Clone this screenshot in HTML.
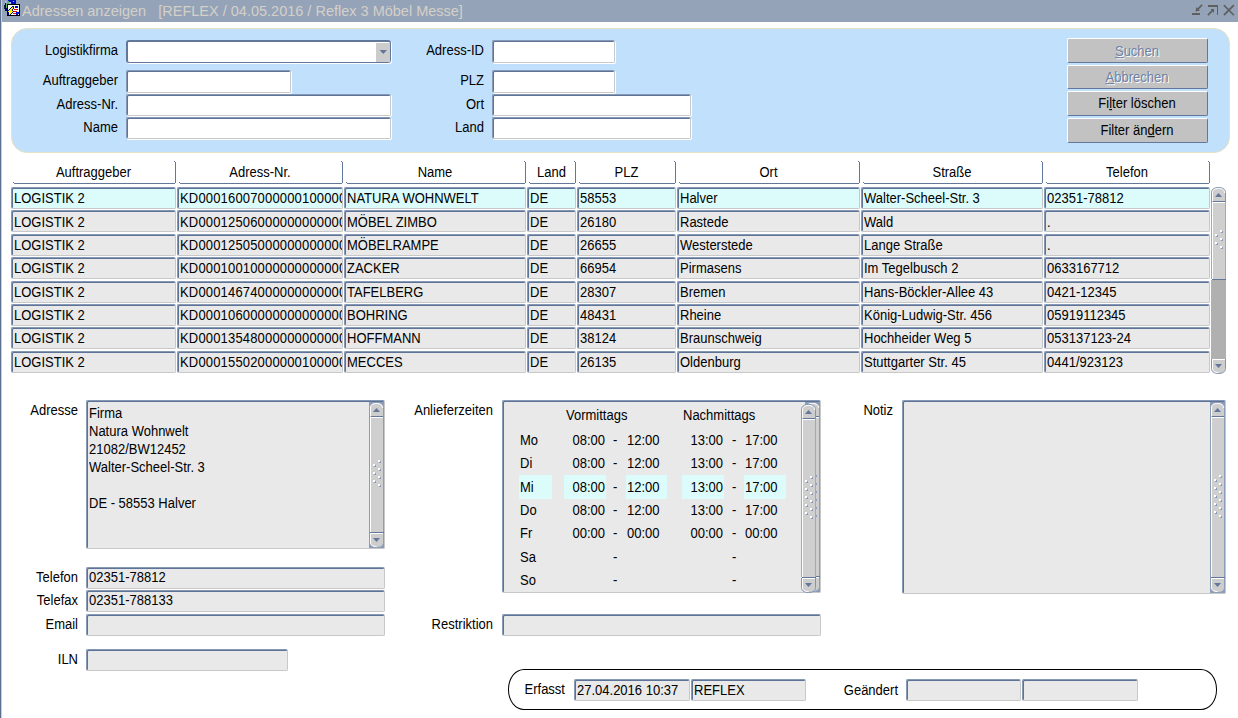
<!DOCTYPE html><html><head><meta charset="utf-8"><style>
html,body{margin:0;padding:0;}
body{width:1238px;height:718px;overflow:hidden;position:relative;background:#fff;font-family:"Liberation Sans",sans-serif;font-size:13px;color:#000;}
.a{position:absolute;box-sizing:border-box;}
.t{position:absolute;white-space:pre;line-height:15px;font-size:13px;transform:scaleY(1.1);transform-origin:0 12px;}
.f{border-top:1px solid #8798b4;border-left:1px solid #8798b4;border-right:1px solid #c8c8c8;border-bottom:1px solid #c8c8c8;border-radius:2px;box-shadow:inset 1px 1px 0 #5d7397;}
.sbb{background:#d0d0d0;border:1px solid #8a9cb6;}
.u{text-decoration:underline;}
</style></head><body>
<div class="a" style="left:0px;top:0px;width:1238px;height:22px;background:#95a3b8"></div>
<div class="a" style="left:0px;top:0px;width:1px;height:718px;background:#5b7090"></div>
<div class="a" style="left:1px;top:0px;width:1px;height:718px;background:#cfcfcf"></div>
<svg class="a" style="left:0px;top:0px" width="22" height="18" viewBox="0 0 22 18" shape-rendering="crispEdges">
<rect x="5" y="3" width="3" height="8" fill="#000070"/>
<rect x="8" y="0" width="8" height="4" fill="#0010c0"/>
<rect x="6" y="1" width="3" height="7" fill="#58b070"/>
<rect x="5" y="1" width="2" height="2" fill="#b8b0f0"/>
<rect x="9" y="2" width="2" height="2" fill="#b8b0f0"/>
<rect x="13" y="1" width="1" height="1" fill="#b8b0f0"/>
<rect x="4" y="5" width="1" height="4" fill="#102040"/>
<rect x="7" y="4" width="13" height="12" fill="#000"/>
<rect x="8" y="5" width="11" height="10" fill="#fff"/>
<rect x="15" y="6" width="3" height="2" fill="#0010d0"/>
<rect x="14" y="9" width="4" height="1" fill="#f00000"/>
<rect x="14" y="11" width="3" height="1" fill="#f00000"/>
<rect x="13" y="13" width="3" height="1" fill="#f00000"/>
<rect x="16" y="12" width="3" height="3" fill="#0010d0"/>
<rect x="18" y="14" width="1" height="1" fill="#fff"/>
<rect x="12" y="6" width="1" height="1" fill="#000080"/><rect x="13" y="6" width="1" height="1" fill="#000080"/><rect x="11" y="7" width="1" height="1" fill="#000080"/><rect x="13" y="7" width="1" height="1" fill="#000080"/><rect x="10" y="8" width="1" height="1" fill="#000080"/><rect x="13" y="8" width="1" height="1" fill="#000080"/><rect x="9" y="9" width="1" height="1" fill="#000080"/><rect x="12" y="9" width="1" height="1" fill="#000080"/><rect x="8" y="10" width="1" height="1" fill="#000080"/><rect x="12" y="10" width="1" height="1" fill="#000080"/><rect x="13" y="11" width="1" height="1" fill="#000080"/><rect x="8" y="12" width="1" height="1" fill="#000080"/><rect x="12" y="12" width="1" height="1" fill="#000080"/><rect x="8" y="13" width="1" height="1" fill="#000080"/><rect x="11" y="13" width="1" height="1" fill="#000080"/><rect x="10" y="14" width="1" height="1" fill="#000080"/><rect x="8" y="14" width="1" height="1" fill="#000080"/><rect x="12" y="7" width="1" height="1" fill="#f8f800"/><rect x="11" y="8" width="1" height="1" fill="#f8f800"/><rect x="12" y="8" width="1" height="1" fill="#f8f800"/><rect x="10" y="9" width="1" height="1" fill="#f8f800"/><rect x="11" y="9" width="1" height="1" fill="#f8f800"/><rect x="9" y="10" width="1" height="1" fill="#f8f800"/><rect x="10" y="10" width="1" height="1" fill="#f8f800"/><rect x="11" y="10" width="1" height="1" fill="#f8f800"/><rect x="8" y="11" width="1" height="1" fill="#f8f800"/><rect x="9" y="11" width="1" height="1" fill="#f8f800"/><rect x="10" y="11" width="1" height="1" fill="#f8f800"/><rect x="11" y="11" width="1" height="1" fill="#f8f800"/><rect x="12" y="11" width="1" height="1" fill="#f8f800"/><rect x="10" y="12" width="1" height="1" fill="#f8f800"/><rect x="11" y="12" width="1" height="1" fill="#f8f800"/><rect x="9" y="13" width="1" height="1" fill="#f8f800"/><rect x="10" y="13" width="1" height="1" fill="#f8f800"/><rect x="9" y="14" width="1" height="1" fill="#f8f800"/>
</svg>
<div class="t" style="left:22px;top:3px;font-size:14.5px;line-height:17px;color:#d4d0c8;transform:none">Adressen anzeigen   [REFLEX / 04.05.2016 / Reflex 3 Möbel Messe]</div>
<svg class="a" style="left:1186px;top:0px" width="52" height="22" viewBox="0 0 52 22">
<g fill="#5f5f5f">
<rect x="6" y="13" width="8" height="2"/>
<rect x="22" y="5" width="10" height="2"/>
<rect x="31" y="5" width="1" height="10"/>
</g>
<g stroke="#5f5f5f" stroke-width="1.7" fill="none" stroke-linecap="square">
<path d="M15.5 5.5 L10.5 10.5"/>
<path d="M22.5 14.5 L27 10"/>
<path d="M38.5 5.8 L47.2 14.5 M47.2 5.8 L38.5 14.5"/>
</g>
<path d="M10 7 L10 11 L14 11 Z" fill="#5f5f5f"/>
<path d="M28 9 L28 13 L24.5 9 Z" fill="#5f5f5f"/>
</svg>
<div class="a" style="left:11px;top:28px;width:1219px;height:125px;background:#c0e0fb;border:1px solid #e6e2c4;border-radius:16px;"></div>
<div class="t" style="left:-482px;width:600px;text-align:right;top:43px;">Logistikfirma</div>
<div class="t" style="left:-482px;width:600px;text-align:right;top:73px;">Auftraggeber</div>
<div class="t" style="left:-482px;width:600px;text-align:right;top:97px;">Adress-Nr.</div>
<div class="t" style="left:-482px;width:600px;text-align:right;top:120px;">Name</div>
<div class="t" style="left:-116px;width:600px;text-align:right;top:43px;">Adress-ID</div>
<div class="t" style="left:-116px;width:600px;text-align:right;top:73px;">PLZ</div>
<div class="t" style="left:-116px;width:600px;text-align:right;top:97px;">Ort</div>
<div class="t" style="left:-116px;width:600px;text-align:right;top:120px;">Land</div>
<div class="a" style="left:126px;top:40px;width:265px;height:23px;background:#fff;border:2px solid #62779a;border-right-width:1px;border-bottom-width:1px;border-radius:3px;box-shadow:1px 1px 0 #fff"></div>
<div class="a" style="left:376px;top:43px;width:14px;height:19px;background:#cccccc"></div>
<svg class="a" style="left:376px;top:46px" width="14" height="12"><path d="M3.6 4 L11 4 L7.3 8 Z" fill="#62779a"/></svg>
<div class="a f" style="left:126px;top:70px;width:165px;height:23px;background:#fff;box-shadow:inset 1px 1px 0 #5d7397,1px 1px 0 #fff;"></div>
<div class="a f" style="left:126px;top:94px;width:265px;height:22px;background:#fff;box-shadow:inset 1px 1px 0 #5d7397,1px 1px 0 #fff;"></div>
<div class="a f" style="left:126px;top:117px;width:265px;height:22px;background:#fff;box-shadow:inset 1px 1px 0 #5d7397,1px 1px 0 #fff;"></div>
<div class="a f" style="left:492px;top:40px;width:123px;height:23px;background:#fff;box-shadow:inset 1px 1px 0 #5d7397,1px 1px 0 #fff;"></div>
<div class="a f" style="left:492px;top:70px;width:123px;height:23px;background:#fff;box-shadow:inset 1px 1px 0 #5d7397,1px 1px 0 #fff;"></div>
<div class="a f" style="left:492px;top:94px;width:199px;height:22px;background:#fff;box-shadow:inset 1px 1px 0 #5d7397,1px 1px 0 #fff;"></div>
<div class="a f" style="left:492px;top:117px;width:199px;height:22px;background:#fff;box-shadow:inset 1px 1px 0 #5d7397,1px 1px 0 #fff;"></div>
<div class="a" style="left:1067px;top:38px;width:141px;height:25px;background:#c2c2c2;border-top:1px solid #fff;border-left:1px solid #fff;border-right:1px solid #62779a;border-bottom:1px solid #62779a;border-radius:2px"></div>
<div class="t" style="left:838px;width:600px;text-align:center;top:45px;color:#fff"><span class="u">S</span>uchen</div>
<div class="t" style="left:837px;width:600px;text-align:center;top:44px;color:#6d82a6"><span class="u">S</span>uchen</div>
<div class="a" style="left:1067px;top:65px;width:141px;height:24px;background:#c2c2c2;border-top:1px solid #fff;border-left:1px solid #fff;border-right:1px solid #62779a;border-bottom:1px solid #62779a;border-radius:2px"></div>
<div class="t" style="left:838px;width:600px;text-align:center;top:71px;color:#fff"><span class="u">A</span>bbrechen</div>
<div class="t" style="left:837px;width:600px;text-align:center;top:70px;color:#6d82a6"><span class="u">A</span>bbrechen</div>
<div class="a" style="left:1067px;top:91px;width:141px;height:25px;background:#c2c2c2;border-top:1px solid #fff;border-left:1px solid #fff;border-right:1px solid #62779a;border-bottom:1px solid #62779a;border-radius:2px"></div>
<div class="t" style="left:837px;width:600px;text-align:center;top:96px;">Fi<span class="u">l</span>ter löschen</div>
<div class="a" style="left:1067px;top:118px;width:141px;height:25px;background:#c2c2c2;border-top:1px solid #fff;border-left:1px solid #fff;border-right:1px solid #62779a;border-bottom:1px solid #62779a;border-radius:2px"></div>
<div class="t" style="left:837px;width:600px;text-align:center;top:123px;">Filter än<span class="u">d</span>ern</div>
<div class="a" style="left:175px;top:162px;width:1px;height:21px;background:#62779a"></div>
<div class="a" style="left:174px;top:161px;width:1px;height:1px;background:#62779a"></div>
<div class="a" style="left:14px;top:183px;width:161px;height:1px;background:#62779a"></div>
<div class="a" style="left:13px;top:182px;width:1px;height:1px;background:#62779a"></div>
<div class="t" style="left:-206.5px;width:600px;text-align:center;top:165px;">Auftraggeber</div>
<div class="a" style="left:342px;top:162px;width:1px;height:21px;background:#62779a"></div>
<div class="a" style="left:341px;top:161px;width:1px;height:1px;background:#62779a"></div>
<div class="a" style="left:180px;top:183px;width:162px;height:1px;background:#62779a"></div>
<div class="a" style="left:179px;top:182px;width:1px;height:1px;background:#62779a"></div>
<div class="t" style="left:-40.0px;width:600px;text-align:center;top:165px;">Adress-Nr.</div>
<div class="a" style="left:525px;top:162px;width:1px;height:21px;background:#62779a"></div>
<div class="a" style="left:524px;top:161px;width:1px;height:1px;background:#62779a"></div>
<div class="a" style="left:347px;top:183px;width:178px;height:1px;background:#62779a"></div>
<div class="a" style="left:346px;top:182px;width:1px;height:1px;background:#62779a"></div>
<div class="t" style="left:135.0px;width:600px;text-align:center;top:165px;">Name</div>
<div class="a" style="left:575px;top:162px;width:1px;height:21px;background:#62779a"></div>
<div class="a" style="left:574px;top:161px;width:1px;height:1px;background:#62779a"></div>
<div class="a" style="left:530px;top:183px;width:45px;height:1px;background:#62779a"></div>
<div class="a" style="left:529px;top:182px;width:1px;height:1px;background:#62779a"></div>
<div class="t" style="left:251.5px;width:600px;text-align:center;top:165px;">Land</div>
<div class="a" style="left:675px;top:162px;width:1px;height:21px;background:#62779a"></div>
<div class="a" style="left:674px;top:161px;width:1px;height:1px;background:#62779a"></div>
<div class="a" style="left:580px;top:183px;width:95px;height:1px;background:#62779a"></div>
<div class="a" style="left:579px;top:182px;width:1px;height:1px;background:#62779a"></div>
<div class="t" style="left:326.5px;width:600px;text-align:center;top:165px;">PLZ</div>
<div class="a" style="left:859px;top:162px;width:1px;height:21px;background:#62779a"></div>
<div class="a" style="left:858px;top:161px;width:1px;height:1px;background:#62779a"></div>
<div class="a" style="left:680px;top:183px;width:179px;height:1px;background:#62779a"></div>
<div class="a" style="left:679px;top:182px;width:1px;height:1px;background:#62779a"></div>
<div class="t" style="left:468.5px;width:600px;text-align:center;top:165px;">Ort</div>
<div class="a" style="left:1042px;top:162px;width:1px;height:21px;background:#62779a"></div>
<div class="a" style="left:1041px;top:161px;width:1px;height:1px;background:#62779a"></div>
<div class="a" style="left:864px;top:183px;width:178px;height:1px;background:#62779a"></div>
<div class="a" style="left:863px;top:182px;width:1px;height:1px;background:#62779a"></div>
<div class="t" style="left:652.0px;width:600px;text-align:center;top:165px;">Straße</div>
<div class="a" style="left:1209px;top:162px;width:1px;height:21px;background:#62779a"></div>
<div class="a" style="left:1208px;top:161px;width:1px;height:1px;background:#62779a"></div>
<div class="a" style="left:1047px;top:183px;width:162px;height:1px;background:#62779a"></div>
<div class="a" style="left:1046px;top:182px;width:1px;height:1px;background:#62779a"></div>
<div class="t" style="left:827.0px;width:600px;text-align:center;top:165px;">Telefon</div>
<div class="a f" style="left:11px;top:187px;width:165px;height:22px;background:#dcfcfc;"></div>
<div class="a" style="left:13px;top:187px;width:162px;height:22px;overflow:hidden"><div class="t" style="left:1px;top:4px;">LOGISTIK 2</div></div>
<div class="a f" style="left:177px;top:187px;width:166px;height:22px;background:#dcfcfc;"></div>
<div class="a" style="left:179px;top:187px;width:163px;height:22px;overflow:hidden"><div class="t" style="left:1px;top:4px;letter-spacing:0.17px;">KD00016007000000100000</div></div>
<div class="a f" style="left:344px;top:187px;width:182px;height:22px;background:#dcfcfc;"></div>
<div class="a" style="left:346px;top:187px;width:179px;height:22px;overflow:hidden"><div class="t" style="left:1px;top:4px;">NATURA WOHNWELT</div></div>
<div class="a f" style="left:527px;top:187px;width:49px;height:22px;background:#dcfcfc;"></div>
<div class="a" style="left:529px;top:187px;width:46px;height:22px;overflow:hidden"><div class="t" style="left:1px;top:4px;">DE</div></div>
<div class="a f" style="left:577px;top:187px;width:99px;height:22px;background:#dcfcfc;"></div>
<div class="a" style="left:579px;top:187px;width:96px;height:22px;overflow:hidden"><div class="t" style="left:1px;top:4px;">58553</div></div>
<div class="a f" style="left:677px;top:187px;width:183px;height:22px;background:#dcfcfc;"></div>
<div class="a" style="left:679px;top:187px;width:180px;height:22px;overflow:hidden"><div class="t" style="left:1px;top:4px;">Halver</div></div>
<div class="a f" style="left:861px;top:187px;width:182px;height:22px;background:#dcfcfc;"></div>
<div class="a" style="left:863px;top:187px;width:179px;height:22px;overflow:hidden"><div class="t" style="left:1px;top:4px;">Walter-Scheel-Str. 3</div></div>
<div class="a f" style="left:1044px;top:187px;width:166px;height:22px;background:#dcfcfc;"></div>
<div class="a" style="left:1046px;top:187px;width:163px;height:22px;overflow:hidden"><div class="t" style="left:1px;top:4px;">02351-78812</div></div>
<div class="a f" style="left:11px;top:210px;width:165px;height:22px;background:#e9e9e9;"></div>
<div class="a" style="left:13px;top:210px;width:162px;height:22px;overflow:hidden"><div class="t" style="left:1px;top:5px;">LOGISTIK 2</div></div>
<div class="a f" style="left:177px;top:210px;width:166px;height:22px;background:#e9e9e9;"></div>
<div class="a" style="left:179px;top:210px;width:163px;height:22px;overflow:hidden"><div class="t" style="left:1px;top:5px;letter-spacing:0.17px;">KD00012506000000000000</div></div>
<div class="a f" style="left:344px;top:210px;width:182px;height:22px;background:#e9e9e9;"></div>
<div class="a" style="left:346px;top:210px;width:179px;height:22px;overflow:hidden"><div class="t" style="left:1px;top:5px;">MÖBEL ZIMBO</div></div>
<div class="a f" style="left:527px;top:210px;width:49px;height:22px;background:#e9e9e9;"></div>
<div class="a" style="left:529px;top:210px;width:46px;height:22px;overflow:hidden"><div class="t" style="left:1px;top:5px;">DE</div></div>
<div class="a f" style="left:577px;top:210px;width:99px;height:22px;background:#e9e9e9;"></div>
<div class="a" style="left:579px;top:210px;width:96px;height:22px;overflow:hidden"><div class="t" style="left:1px;top:5px;">26180</div></div>
<div class="a f" style="left:677px;top:210px;width:183px;height:22px;background:#e9e9e9;"></div>
<div class="a" style="left:679px;top:210px;width:180px;height:22px;overflow:hidden"><div class="t" style="left:1px;top:5px;">Rastede</div></div>
<div class="a f" style="left:861px;top:210px;width:182px;height:22px;background:#e9e9e9;"></div>
<div class="a" style="left:863px;top:210px;width:179px;height:22px;overflow:hidden"><div class="t" style="left:1px;top:5px;">Wald</div></div>
<div class="a f" style="left:1044px;top:210px;width:166px;height:22px;background:#e9e9e9;"></div>
<div class="a" style="left:1046px;top:210px;width:163px;height:22px;overflow:hidden"><div class="t" style="left:1px;top:5px;">.</div></div>
<div class="a f" style="left:11px;top:234px;width:165px;height:22px;background:#e9e9e9;"></div>
<div class="a" style="left:13px;top:234px;width:162px;height:22px;overflow:hidden"><div class="t" style="left:1px;top:4px;">LOGISTIK 2</div></div>
<div class="a f" style="left:177px;top:234px;width:166px;height:22px;background:#e9e9e9;"></div>
<div class="a" style="left:179px;top:234px;width:163px;height:22px;overflow:hidden"><div class="t" style="left:1px;top:4px;letter-spacing:0.17px;">KD00012505000000000000</div></div>
<div class="a f" style="left:344px;top:234px;width:182px;height:22px;background:#e9e9e9;"></div>
<div class="a" style="left:346px;top:234px;width:179px;height:22px;overflow:hidden"><div class="t" style="left:1px;top:4px;">MÖBELRAMPE</div></div>
<div class="a f" style="left:527px;top:234px;width:49px;height:22px;background:#e9e9e9;"></div>
<div class="a" style="left:529px;top:234px;width:46px;height:22px;overflow:hidden"><div class="t" style="left:1px;top:4px;">DE</div></div>
<div class="a f" style="left:577px;top:234px;width:99px;height:22px;background:#e9e9e9;"></div>
<div class="a" style="left:579px;top:234px;width:96px;height:22px;overflow:hidden"><div class="t" style="left:1px;top:4px;">26655</div></div>
<div class="a f" style="left:677px;top:234px;width:183px;height:22px;background:#e9e9e9;"></div>
<div class="a" style="left:679px;top:234px;width:180px;height:22px;overflow:hidden"><div class="t" style="left:1px;top:4px;">Westerstede</div></div>
<div class="a f" style="left:861px;top:234px;width:182px;height:22px;background:#e9e9e9;"></div>
<div class="a" style="left:863px;top:234px;width:179px;height:22px;overflow:hidden"><div class="t" style="left:1px;top:4px;">Lange Straße</div></div>
<div class="a f" style="left:1044px;top:234px;width:166px;height:22px;background:#e9e9e9;"></div>
<div class="a" style="left:1046px;top:234px;width:163px;height:22px;overflow:hidden"><div class="t" style="left:1px;top:4px;">.</div></div>
<div class="a f" style="left:11px;top:257px;width:165px;height:22px;background:#e9e9e9;"></div>
<div class="a" style="left:13px;top:257px;width:162px;height:22px;overflow:hidden"><div class="t" style="left:1px;top:4px;">LOGISTIK 2</div></div>
<div class="a f" style="left:177px;top:257px;width:166px;height:22px;background:#e9e9e9;"></div>
<div class="a" style="left:179px;top:257px;width:163px;height:22px;overflow:hidden"><div class="t" style="left:1px;top:4px;letter-spacing:0.17px;">KD00010010000000000000</div></div>
<div class="a f" style="left:344px;top:257px;width:182px;height:22px;background:#e9e9e9;"></div>
<div class="a" style="left:346px;top:257px;width:179px;height:22px;overflow:hidden"><div class="t" style="left:1px;top:4px;">ZACKER</div></div>
<div class="a f" style="left:527px;top:257px;width:49px;height:22px;background:#e9e9e9;"></div>
<div class="a" style="left:529px;top:257px;width:46px;height:22px;overflow:hidden"><div class="t" style="left:1px;top:4px;">DE</div></div>
<div class="a f" style="left:577px;top:257px;width:99px;height:22px;background:#e9e9e9;"></div>
<div class="a" style="left:579px;top:257px;width:96px;height:22px;overflow:hidden"><div class="t" style="left:1px;top:4px;">66954</div></div>
<div class="a f" style="left:677px;top:257px;width:183px;height:22px;background:#e9e9e9;"></div>
<div class="a" style="left:679px;top:257px;width:180px;height:22px;overflow:hidden"><div class="t" style="left:1px;top:4px;">Pirmasens</div></div>
<div class="a f" style="left:861px;top:257px;width:182px;height:22px;background:#e9e9e9;"></div>
<div class="a" style="left:863px;top:257px;width:179px;height:22px;overflow:hidden"><div class="t" style="left:1px;top:4px;">Im Tegelbusch 2</div></div>
<div class="a f" style="left:1044px;top:257px;width:166px;height:22px;background:#e9e9e9;"></div>
<div class="a" style="left:1046px;top:257px;width:163px;height:22px;overflow:hidden"><div class="t" style="left:1px;top:4px;">0633167712</div></div>
<div class="a f" style="left:11px;top:281px;width:165px;height:22px;background:#e9e9e9;"></div>
<div class="a" style="left:13px;top:281px;width:162px;height:22px;overflow:hidden"><div class="t" style="left:1px;top:4px;">LOGISTIK 2</div></div>
<div class="a f" style="left:177px;top:281px;width:166px;height:22px;background:#e9e9e9;"></div>
<div class="a" style="left:179px;top:281px;width:163px;height:22px;overflow:hidden"><div class="t" style="left:1px;top:4px;letter-spacing:0.17px;">KD00014674000000000000</div></div>
<div class="a f" style="left:344px;top:281px;width:182px;height:22px;background:#e9e9e9;"></div>
<div class="a" style="left:346px;top:281px;width:179px;height:22px;overflow:hidden"><div class="t" style="left:1px;top:4px;">TAFELBERG</div></div>
<div class="a f" style="left:527px;top:281px;width:49px;height:22px;background:#e9e9e9;"></div>
<div class="a" style="left:529px;top:281px;width:46px;height:22px;overflow:hidden"><div class="t" style="left:1px;top:4px;">DE</div></div>
<div class="a f" style="left:577px;top:281px;width:99px;height:22px;background:#e9e9e9;"></div>
<div class="a" style="left:579px;top:281px;width:96px;height:22px;overflow:hidden"><div class="t" style="left:1px;top:4px;">28307</div></div>
<div class="a f" style="left:677px;top:281px;width:183px;height:22px;background:#e9e9e9;"></div>
<div class="a" style="left:679px;top:281px;width:180px;height:22px;overflow:hidden"><div class="t" style="left:1px;top:4px;">Bremen</div></div>
<div class="a f" style="left:861px;top:281px;width:182px;height:22px;background:#e9e9e9;"></div>
<div class="a" style="left:863px;top:281px;width:179px;height:22px;overflow:hidden"><div class="t" style="left:1px;top:4px;">Hans-Böckler-Allee 43</div></div>
<div class="a f" style="left:1044px;top:281px;width:166px;height:22px;background:#e9e9e9;"></div>
<div class="a" style="left:1046px;top:281px;width:163px;height:22px;overflow:hidden"><div class="t" style="left:1px;top:4px;">0421-12345</div></div>
<div class="a f" style="left:11px;top:304px;width:165px;height:22px;background:#e9e9e9;"></div>
<div class="a" style="left:13px;top:304px;width:162px;height:22px;overflow:hidden"><div class="t" style="left:1px;top:4px;">LOGISTIK 2</div></div>
<div class="a f" style="left:177px;top:304px;width:166px;height:22px;background:#e9e9e9;"></div>
<div class="a" style="left:179px;top:304px;width:163px;height:22px;overflow:hidden"><div class="t" style="left:1px;top:4px;letter-spacing:0.17px;">KD00010600000000000000</div></div>
<div class="a f" style="left:344px;top:304px;width:182px;height:22px;background:#e9e9e9;"></div>
<div class="a" style="left:346px;top:304px;width:179px;height:22px;overflow:hidden"><div class="t" style="left:1px;top:4px;">BOHRING</div></div>
<div class="a f" style="left:527px;top:304px;width:49px;height:22px;background:#e9e9e9;"></div>
<div class="a" style="left:529px;top:304px;width:46px;height:22px;overflow:hidden"><div class="t" style="left:1px;top:4px;">DE</div></div>
<div class="a f" style="left:577px;top:304px;width:99px;height:22px;background:#e9e9e9;"></div>
<div class="a" style="left:579px;top:304px;width:96px;height:22px;overflow:hidden"><div class="t" style="left:1px;top:4px;">48431</div></div>
<div class="a f" style="left:677px;top:304px;width:183px;height:22px;background:#e9e9e9;"></div>
<div class="a" style="left:679px;top:304px;width:180px;height:22px;overflow:hidden"><div class="t" style="left:1px;top:4px;">Rheine</div></div>
<div class="a f" style="left:861px;top:304px;width:182px;height:22px;background:#e9e9e9;"></div>
<div class="a" style="left:863px;top:304px;width:179px;height:22px;overflow:hidden"><div class="t" style="left:1px;top:4px;">König-Ludwig-Str. 456</div></div>
<div class="a f" style="left:1044px;top:304px;width:166px;height:22px;background:#e9e9e9;"></div>
<div class="a" style="left:1046px;top:304px;width:163px;height:22px;overflow:hidden"><div class="t" style="left:1px;top:4px;">05919112345</div></div>
<div class="a f" style="left:11px;top:327px;width:165px;height:22px;background:#e9e9e9;"></div>
<div class="a" style="left:13px;top:327px;width:162px;height:22px;overflow:hidden"><div class="t" style="left:1px;top:4px;">LOGISTIK 2</div></div>
<div class="a f" style="left:177px;top:327px;width:166px;height:22px;background:#e9e9e9;"></div>
<div class="a" style="left:179px;top:327px;width:163px;height:22px;overflow:hidden"><div class="t" style="left:1px;top:4px;letter-spacing:0.17px;">KD00013548000000000000</div></div>
<div class="a f" style="left:344px;top:327px;width:182px;height:22px;background:#e9e9e9;"></div>
<div class="a" style="left:346px;top:327px;width:179px;height:22px;overflow:hidden"><div class="t" style="left:1px;top:4px;">HOFFMANN</div></div>
<div class="a f" style="left:527px;top:327px;width:49px;height:22px;background:#e9e9e9;"></div>
<div class="a" style="left:529px;top:327px;width:46px;height:22px;overflow:hidden"><div class="t" style="left:1px;top:4px;">DE</div></div>
<div class="a f" style="left:577px;top:327px;width:99px;height:22px;background:#e9e9e9;"></div>
<div class="a" style="left:579px;top:327px;width:96px;height:22px;overflow:hidden"><div class="t" style="left:1px;top:4px;">38124</div></div>
<div class="a f" style="left:677px;top:327px;width:183px;height:22px;background:#e9e9e9;"></div>
<div class="a" style="left:679px;top:327px;width:180px;height:22px;overflow:hidden"><div class="t" style="left:1px;top:4px;">Braunschweig</div></div>
<div class="a f" style="left:861px;top:327px;width:182px;height:22px;background:#e9e9e9;"></div>
<div class="a" style="left:863px;top:327px;width:179px;height:22px;overflow:hidden"><div class="t" style="left:1px;top:4px;">Hochheider Weg 5</div></div>
<div class="a f" style="left:1044px;top:327px;width:166px;height:22px;background:#e9e9e9;"></div>
<div class="a" style="left:1046px;top:327px;width:163px;height:22px;overflow:hidden"><div class="t" style="left:1px;top:4px;">053137123-24</div></div>
<div class="a f" style="left:11px;top:351px;width:165px;height:22px;background:#e9e9e9;"></div>
<div class="a" style="left:13px;top:351px;width:162px;height:22px;overflow:hidden"><div class="t" style="left:1px;top:4px;">LOGISTIK 2</div></div>
<div class="a f" style="left:177px;top:351px;width:166px;height:22px;background:#e9e9e9;"></div>
<div class="a" style="left:179px;top:351px;width:163px;height:22px;overflow:hidden"><div class="t" style="left:1px;top:4px;letter-spacing:0.17px;">KD00015502000000100000</div></div>
<div class="a f" style="left:344px;top:351px;width:182px;height:22px;background:#e9e9e9;"></div>
<div class="a" style="left:346px;top:351px;width:179px;height:22px;overflow:hidden"><div class="t" style="left:1px;top:4px;">MECCES</div></div>
<div class="a f" style="left:527px;top:351px;width:49px;height:22px;background:#e9e9e9;"></div>
<div class="a" style="left:529px;top:351px;width:46px;height:22px;overflow:hidden"><div class="t" style="left:1px;top:4px;">DE</div></div>
<div class="a f" style="left:577px;top:351px;width:99px;height:22px;background:#e9e9e9;"></div>
<div class="a" style="left:579px;top:351px;width:96px;height:22px;overflow:hidden"><div class="t" style="left:1px;top:4px;">26135</div></div>
<div class="a f" style="left:677px;top:351px;width:183px;height:22px;background:#e9e9e9;"></div>
<div class="a" style="left:679px;top:351px;width:180px;height:22px;overflow:hidden"><div class="t" style="left:1px;top:4px;">Oldenburg</div></div>
<div class="a f" style="left:861px;top:351px;width:182px;height:22px;background:#e9e9e9;"></div>
<div class="a" style="left:863px;top:351px;width:179px;height:22px;overflow:hidden"><div class="t" style="left:1px;top:4px;">Stuttgarter Str. 45</div></div>
<div class="a f" style="left:1044px;top:351px;width:166px;height:22px;background:#e9e9e9;"></div>
<div class="a" style="left:1046px;top:351px;width:163px;height:22px;overflow:hidden"><div class="t" style="left:1px;top:4px;">0441/923123</div></div>
<svg class="a" style="left:1211px;top:187px" width="15" height="187" viewBox="0 0 15 187"><rect x="0" y="15" width="1" height="77" fill="#a8a8a8"/><rect x="14" y="15" width="1" height="77" fill="#a8a8a8"/><rect x="1" y="15" width="13" height="77" fill="#fff"/><rect x="2" y="16" width="12" height="76" fill="#cfcfcf"/><rect x="1" y="92" width="14" height="1" fill="#62779a"/><rect x="0" y="93" width="15" height="79" fill="#b0b0b0"/><rect x="10" y="44" width="2" height="2" fill="#8a9cb8"/><rect x="9" y="43" width="2" height="2" fill="#fff"/><rect x="5" y="48" width="2" height="2" fill="#8a9cb8"/><rect x="4" y="47" width="2" height="2" fill="#fff"/><rect x="10" y="52" width="2" height="2" fill="#8a9cb8"/><rect x="9" y="51" width="2" height="2" fill="#fff"/><rect x="5" y="56" width="2" height="2" fill="#8a9cb8"/><rect x="4" y="55" width="2" height="2" fill="#fff"/><rect x="10" y="60" width="2" height="2" fill="#8a9cb8"/><rect x="9" y="59" width="2" height="2" fill="#fff"/><path d="M0.5 15 V5.5 C0.5 2.5 3 0.5 7.5 0.5 C12 0.5 14.5 2.5 14.5 5.5 V15" fill="#cdcdcd" stroke="#8094b4" stroke-width="1"/><path d="M1.5 14 V6 C1.5 3.2 3.5 1.5 7.5 1.5 C11.5 1.5 13.5 3.2 13.5 6" fill="none" stroke="#fff" stroke-width="1"/><path d="M7.5 6 L11 10 L4 10 Z" fill="#62779a"/><rect x="2" y="14" width="12" height="1" fill="#62779a"/><path d="M0.5 172 V181.5 C0.5 184.5 3 186.5 7.5 186.5 C12 186.5 14.5 184.5 14.5 181.5 V172" fill="#cdcdcd" stroke="#8094b4" stroke-width="1"/><path d="M1.5 172 V181 C1.5 183.8 3.5 185.5 7.5 185.5" fill="none" stroke="#fff" stroke-width="1"/><rect x="1" y="172" width="13" height="1" fill="#fff"/><path d="M4 177 L11 177 L7.5 181 Z" fill="#62779a"/></svg>
<div class="t" style="left:-522px;width:600px;text-align:right;top:403px;">Adresse</div>
<div class="a f" style="left:86px;top:400px;width:299px;height:149px;background:#e9e9e9;"></div>
<div class="t" style="left:89px;top:406px;">Firma</div>
<div class="t" style="left:89px;top:424px;">Natura Wohnwelt</div>
<div class="t" style="left:89px;top:442px;">21082/BW12452</div>
<div class="t" style="left:89px;top:460px;">Walter-Scheel-Str. 3</div>
<div class="t" style="left:89px;top:496px;">DE - 58553 Halver</div>
<svg class="a" style="left:369px;top:402px" width="15" height="146" viewBox="0 0 15 146"><rect x="0" y="0" width="15" height="146" fill="#8a9cb8"/><rect x="1" y="15" width="13" height="115" fill="#fff"/><rect x="2" y="16" width="12" height="114" fill="#cfcfcf"/><rect x="1" y="130" width="14" height="1" fill="#62779a"/><rect x="10" y="59" width="2" height="2" fill="#8a9cb8"/><rect x="9" y="58" width="2" height="2" fill="#fff"/><rect x="5" y="63" width="2" height="2" fill="#8a9cb8"/><rect x="4" y="62" width="2" height="2" fill="#fff"/><rect x="10" y="67" width="2" height="2" fill="#8a9cb8"/><rect x="9" y="66" width="2" height="2" fill="#fff"/><rect x="5" y="71" width="2" height="2" fill="#8a9cb8"/><rect x="4" y="70" width="2" height="2" fill="#fff"/><rect x="10" y="75" width="2" height="2" fill="#8a9cb8"/><rect x="9" y="74" width="2" height="2" fill="#fff"/><rect x="5" y="79" width="2" height="2" fill="#8a9cb8"/><rect x="4" y="78" width="2" height="2" fill="#fff"/><rect x="10" y="83" width="2" height="2" fill="#8a9cb8"/><rect x="9" y="82" width="2" height="2" fill="#fff"/><path d="M0.5 15 V5.5 C0.5 2.5 3 0.5 7.5 0.5 C12 0.5 14.5 2.5 14.5 5.5 V15" fill="#cdcdcd" stroke="#8a9cb8" stroke-width="1"/><path d="M1.5 14 V6 C1.5 3.2 3.5 1.5 7.5 1.5 C11.5 1.5 13.5 3.2 13.5 6" fill="none" stroke="#fff" stroke-width="1"/><path d="M7.5 6 L11 10 L4 10 Z" fill="#62779a"/><rect x="2" y="14" width="12" height="1" fill="#62779a"/><path d="M0.5 131 V140.5 C0.5 143.5 3 145.5 7.5 145.5 C12 145.5 14.5 143.5 14.5 140.5 V131" fill="#cdcdcd" stroke="#8a9cb8" stroke-width="1"/><path d="M1.5 131 V140 C1.5 142.8 3.5 144.5 7.5 144.5" fill="none" stroke="#fff" stroke-width="1"/><rect x="1" y="131" width="13" height="1" fill="#fff"/><path d="M4 136 L11 136 L7.5 140 Z" fill="#62779a"/></svg>
<div class="t" style="left:-522px;width:600px;text-align:right;top:570px;">Telefon</div>
<div class="a f" style="left:86px;top:567px;width:299px;height:22px;background:#e9e9e9;"></div>
<div class="t" style="left:89px;top:570px;">02351-78812</div>
<div class="t" style="left:-522px;width:600px;text-align:right;top:593px;">Telefax</div>
<div class="a f" style="left:86px;top:590px;width:299px;height:22px;background:#e9e9e9;"></div>
<div class="t" style="left:89px;top:593px;">02351-788133</div>
<div class="t" style="left:-522px;width:600px;text-align:right;top:617px;">Email</div>
<div class="a f" style="left:86px;top:614px;width:299px;height:22px;background:#e9e9e9;"></div>
<div class="t" style="left:-522px;width:600px;text-align:right;top:652px;">ILN</div>
<div class="a f" style="left:86px;top:649px;width:202px;height:22px;background:#e9e9e9;"></div>
<div class="t" style="left:-107px;width:600px;text-align:right;top:403px;">Anlieferzeiten</div>
<div class="a f" style="left:502px;top:400px;width:319px;height:193px;background:#e9e9e9;"></div>
<div class="a" style="left:519px;top:475px;width:33px;height:24px;background:#dcfcfc"></div>
<div class="a" style="left:564px;top:475px;width:42px;height:24px;background:#dcfcfc"></div>
<div class="a" style="left:626px;top:475px;width:41px;height:24px;background:#dcfcfc"></div>
<div class="a" style="left:682px;top:475px;width:42px;height:24px;background:#dcfcfc"></div>
<div class="a" style="left:744px;top:475px;width:42px;height:24px;background:#dcfcfc"></div>
<div class="t" style="left:566px;top:408px;">Vormittags</div>
<div class="t" style="left:683px;top:408px;">Nachmittags</div>
<div class="t" style="left:520px;top:433px;">Mo</div>
<div class="t" style="left:5px;width:600px;text-align:right;top:433px;">08:00</div>
<div class="t" style="left:613px;top:433px;">-</div>
<div class="t" style="left:627px;top:433px;">12:00</div>
<div class="t" style="left:123px;width:600px;text-align:right;top:433px;">13:00</div>
<div class="t" style="left:732px;top:433px;">-</div>
<div class="t" style="left:745px;top:433px;">17:00</div>
<div class="t" style="left:520px;top:456px;">Di</div>
<div class="t" style="left:5px;width:600px;text-align:right;top:456px;">08:00</div>
<div class="t" style="left:613px;top:456px;">-</div>
<div class="t" style="left:627px;top:456px;">12:00</div>
<div class="t" style="left:123px;width:600px;text-align:right;top:456px;">13:00</div>
<div class="t" style="left:732px;top:456px;">-</div>
<div class="t" style="left:745px;top:456px;">17:00</div>
<div class="t" style="left:520px;top:480px;">Mi</div>
<div class="t" style="left:5px;width:600px;text-align:right;top:480px;">08:00</div>
<div class="t" style="left:613px;top:480px;">-</div>
<div class="t" style="left:627px;top:480px;">12:00</div>
<div class="t" style="left:123px;width:600px;text-align:right;top:480px;">13:00</div>
<div class="t" style="left:732px;top:480px;">-</div>
<div class="t" style="left:745px;top:480px;">17:00</div>
<div class="t" style="left:520px;top:503px;">Do</div>
<div class="t" style="left:5px;width:600px;text-align:right;top:503px;">08:00</div>
<div class="t" style="left:613px;top:503px;">-</div>
<div class="t" style="left:627px;top:503px;">12:00</div>
<div class="t" style="left:123px;width:600px;text-align:right;top:503px;">13:00</div>
<div class="t" style="left:732px;top:503px;">-</div>
<div class="t" style="left:745px;top:503px;">17:00</div>
<div class="t" style="left:520px;top:526px;">Fr</div>
<div class="t" style="left:5px;width:600px;text-align:right;top:526px;">00:00</div>
<div class="t" style="left:613px;top:526px;">-</div>
<div class="t" style="left:627px;top:526px;">00:00</div>
<div class="t" style="left:123px;width:600px;text-align:right;top:526px;">00:00</div>
<div class="t" style="left:732px;top:526px;">-</div>
<div class="t" style="left:745px;top:526px;">00:00</div>
<div class="t" style="left:520px;top:550px;">Sa</div>
<div class="t" style="left:5px;width:600px;text-align:right;top:550px;"></div>
<div class="t" style="left:613px;top:550px;">-</div>
<div class="t" style="left:627px;top:550px;"></div>
<div class="t" style="left:123px;width:600px;text-align:right;top:550px;"></div>
<div class="t" style="left:732px;top:550px;">-</div>
<div class="t" style="left:745px;top:550px;"></div>
<div class="t" style="left:520px;top:573px;">So</div>
<div class="t" style="left:5px;width:600px;text-align:right;top:573px;"></div>
<div class="t" style="left:613px;top:573px;">-</div>
<div class="t" style="left:627px;top:573px;"></div>
<div class="t" style="left:123px;width:600px;text-align:right;top:573px;"></div>
<div class="t" style="left:732px;top:573px;">-</div>
<div class="t" style="left:745px;top:573px;"></div>
<svg class="a" style="left:805px;top:402px" width="15" height="190" viewBox="0 0 15 190"><rect x="0" y="0" width="15" height="190" fill="#8a9cb8"/><rect x="1" y="15" width="13" height="159" fill="#fff"/><rect x="2" y="16" width="12" height="158" fill="#cfcfcf"/><rect x="1" y="174" width="14" height="1" fill="#62779a"/><rect x="10" y="73" width="2" height="2" fill="#8a9cb8"/><rect x="9" y="72" width="2" height="2" fill="#fff"/><rect x="5" y="77" width="2" height="2" fill="#8a9cb8"/><rect x="4" y="76" width="2" height="2" fill="#fff"/><rect x="10" y="81" width="2" height="2" fill="#8a9cb8"/><rect x="9" y="80" width="2" height="2" fill="#fff"/><rect x="5" y="85" width="2" height="2" fill="#8a9cb8"/><rect x="4" y="84" width="2" height="2" fill="#fff"/><rect x="10" y="89" width="2" height="2" fill="#8a9cb8"/><rect x="9" y="88" width="2" height="2" fill="#fff"/><rect x="5" y="93" width="2" height="2" fill="#8a9cb8"/><rect x="4" y="92" width="2" height="2" fill="#fff"/><rect x="10" y="97" width="2" height="2" fill="#8a9cb8"/><rect x="9" y="96" width="2" height="2" fill="#fff"/><rect x="5" y="101" width="2" height="2" fill="#8a9cb8"/><rect x="4" y="100" width="2" height="2" fill="#fff"/><rect x="10" y="105" width="2" height="2" fill="#8a9cb8"/><rect x="9" y="104" width="2" height="2" fill="#fff"/><rect x="5" y="109" width="2" height="2" fill="#8a9cb8"/><rect x="4" y="108" width="2" height="2" fill="#fff"/><rect x="10" y="113" width="2" height="2" fill="#8a9cb8"/><rect x="9" y="112" width="2" height="2" fill="#fff"/><path d="M0.5 15 V5.5 C0.5 2.5 3 0.5 7.5 0.5 C12 0.5 14.5 2.5 14.5 5.5 V15" fill="#cdcdcd" stroke="#8a9cb8" stroke-width="1"/><path d="M1.5 14 V6 C1.5 3.2 3.5 1.5 7.5 1.5 C11.5 1.5 13.5 3.2 13.5 6" fill="none" stroke="#fff" stroke-width="1"/><path d="M7.5 6 L11 10 L4 10 Z" fill="#62779a"/><rect x="2" y="14" width="12" height="1" fill="#62779a"/><path d="M0.5 175 V184.5 C0.5 187.5 3 189.5 7.5 189.5 C12 189.5 14.5 187.5 14.5 184.5 V175" fill="#cdcdcd" stroke="#8a9cb8" stroke-width="1"/><path d="M1.5 175 V184 C1.5 186.8 3.5 188.5 7.5 188.5" fill="none" stroke="#fff" stroke-width="1"/><rect x="1" y="175" width="13" height="1" fill="#fff"/><path d="M4 180 L11 180 L7.5 184 Z" fill="#62779a"/></svg>
<svg class="a" style="left:801px;top:404px" width="15" height="189" viewBox="0 0 15 189"><rect x="0" y="15" width="1" height="158" fill="#a8a8a8"/><rect x="14" y="15" width="1" height="158" fill="#a8a8a8"/><rect x="1" y="15" width="13" height="158" fill="#fff"/><rect x="2" y="16" width="12" height="157" fill="#cfcfcf"/><rect x="1" y="173" width="14" height="1" fill="#62779a"/><rect x="10" y="73" width="2" height="2" fill="#8a9cb8"/><rect x="9" y="72" width="2" height="2" fill="#fff"/><rect x="5" y="77" width="2" height="2" fill="#8a9cb8"/><rect x="4" y="76" width="2" height="2" fill="#fff"/><rect x="10" y="81" width="2" height="2" fill="#8a9cb8"/><rect x="9" y="80" width="2" height="2" fill="#fff"/><rect x="5" y="85" width="2" height="2" fill="#8a9cb8"/><rect x="4" y="84" width="2" height="2" fill="#fff"/><rect x="10" y="89" width="2" height="2" fill="#8a9cb8"/><rect x="9" y="88" width="2" height="2" fill="#fff"/><rect x="5" y="93" width="2" height="2" fill="#8a9cb8"/><rect x="4" y="92" width="2" height="2" fill="#fff"/><rect x="10" y="97" width="2" height="2" fill="#8a9cb8"/><rect x="9" y="96" width="2" height="2" fill="#fff"/><rect x="5" y="101" width="2" height="2" fill="#8a9cb8"/><rect x="4" y="100" width="2" height="2" fill="#fff"/><rect x="10" y="105" width="2" height="2" fill="#8a9cb8"/><rect x="9" y="104" width="2" height="2" fill="#fff"/><rect x="5" y="109" width="2" height="2" fill="#8a9cb8"/><rect x="4" y="108" width="2" height="2" fill="#fff"/><rect x="10" y="113" width="2" height="2" fill="#8a9cb8"/><rect x="9" y="112" width="2" height="2" fill="#fff"/><path d="M0.5 15 V5.5 C0.5 2.5 3 0.5 7.5 0.5 C12 0.5 14.5 2.5 14.5 5.5 V15" fill="#cdcdcd" stroke="#8094b4" stroke-width="1"/><path d="M1.5 14 V6 C1.5 3.2 3.5 1.5 7.5 1.5 C11.5 1.5 13.5 3.2 13.5 6" fill="none" stroke="#fff" stroke-width="1"/><path d="M7.5 6 L11 10 L4 10 Z" fill="#62779a"/><rect x="2" y="14" width="12" height="1" fill="#62779a"/><path d="M0.5 174 V183.5 C0.5 186.5 3 188.5 7.5 188.5 C12 188.5 14.5 186.5 14.5 183.5 V174" fill="#cdcdcd" stroke="#8094b4" stroke-width="1"/><path d="M1.5 174 V183 C1.5 185.8 3.5 187.5 7.5 187.5" fill="none" stroke="#fff" stroke-width="1"/><rect x="1" y="174" width="13" height="1" fill="#fff"/><path d="M4 179 L11 179 L7.5 183 Z" fill="#62779a"/></svg>
<div class="t" style="left:-107px;width:600px;text-align:right;top:617px;">Restriktion</div>
<div class="a f" style="left:502px;top:614px;width:319px;height:22px;background:#e9e9e9;"></div>
<div class="t" style="left:293px;width:600px;text-align:right;top:403px;">Notiz</div>
<div class="a f" style="left:902px;top:400px;width:324px;height:194px;background:#e9e9e9;"></div>
<svg class="a" style="left:1210px;top:402px" width="15" height="191" viewBox="0 0 15 191"><rect x="0" y="0" width="15" height="191" fill="#8a9cb8"/><rect x="1" y="15" width="13" height="160" fill="#fff"/><rect x="2" y="16" width="12" height="159" fill="#cfcfcf"/><rect x="1" y="175" width="14" height="1" fill="#62779a"/><rect x="10" y="74" width="2" height="2" fill="#8a9cb8"/><rect x="9" y="73" width="2" height="2" fill="#fff"/><rect x="5" y="78" width="2" height="2" fill="#8a9cb8"/><rect x="4" y="77" width="2" height="2" fill="#fff"/><rect x="10" y="82" width="2" height="2" fill="#8a9cb8"/><rect x="9" y="81" width="2" height="2" fill="#fff"/><rect x="5" y="86" width="2" height="2" fill="#8a9cb8"/><rect x="4" y="85" width="2" height="2" fill="#fff"/><rect x="10" y="90" width="2" height="2" fill="#8a9cb8"/><rect x="9" y="89" width="2" height="2" fill="#fff"/><rect x="5" y="94" width="2" height="2" fill="#8a9cb8"/><rect x="4" y="93" width="2" height="2" fill="#fff"/><rect x="10" y="98" width="2" height="2" fill="#8a9cb8"/><rect x="9" y="97" width="2" height="2" fill="#fff"/><rect x="5" y="102" width="2" height="2" fill="#8a9cb8"/><rect x="4" y="101" width="2" height="2" fill="#fff"/><rect x="10" y="106" width="2" height="2" fill="#8a9cb8"/><rect x="9" y="105" width="2" height="2" fill="#fff"/><rect x="5" y="110" width="2" height="2" fill="#8a9cb8"/><rect x="4" y="109" width="2" height="2" fill="#fff"/><rect x="10" y="114" width="2" height="2" fill="#8a9cb8"/><rect x="9" y="113" width="2" height="2" fill="#fff"/><path d="M0.5 15 V5.5 C0.5 2.5 3 0.5 7.5 0.5 C12 0.5 14.5 2.5 14.5 5.5 V15" fill="#cdcdcd" stroke="#8a9cb8" stroke-width="1"/><path d="M1.5 14 V6 C1.5 3.2 3.5 1.5 7.5 1.5 C11.5 1.5 13.5 3.2 13.5 6" fill="none" stroke="#fff" stroke-width="1"/><path d="M7.5 6 L11 10 L4 10 Z" fill="#62779a"/><rect x="2" y="14" width="12" height="1" fill="#62779a"/><path d="M0.5 176 V185.5 C0.5 188.5 3 190.5 7.5 190.5 C12 190.5 14.5 188.5 14.5 185.5 V176" fill="#cdcdcd" stroke="#8a9cb8" stroke-width="1"/><path d="M1.5 176 V185 C1.5 187.8 3.5 189.5 7.5 189.5" fill="none" stroke="#fff" stroke-width="1"/><rect x="1" y="176" width="13" height="1" fill="#fff"/><path d="M4 181 L11 181 L7.5 185 Z" fill="#62779a"/></svg>
<div class="a" style="left:508px;top:669px;width:709px;height:41px;border:1px solid #000;border-radius:16px/20px"></div>
<div class="t" style="left:-35px;width:600px;text-align:right;top:682px;">Erfasst</div>
<div class="a f" style="left:574px;top:679px;width:116px;height:22px;background:#e9e9e9;"></div>
<div class="t" style="left:577px;top:683px;">27.04.2016 10:37</div>
<div class="a f" style="left:691px;top:679px;width:115px;height:22px;background:#e9e9e9;"></div>
<div class="t" style="left:694px;top:683px;">REFLEX</div>
<div class="t" style="left:298px;width:600px;text-align:right;top:683px;">Geändert</div>
<div class="a f" style="left:906px;top:679px;width:115px;height:22px;background:#e9e9e9;"></div>
<div class="a f" style="left:1022px;top:679px;width:116px;height:22px;background:#e9e9e9;"></div>
</body></html>
